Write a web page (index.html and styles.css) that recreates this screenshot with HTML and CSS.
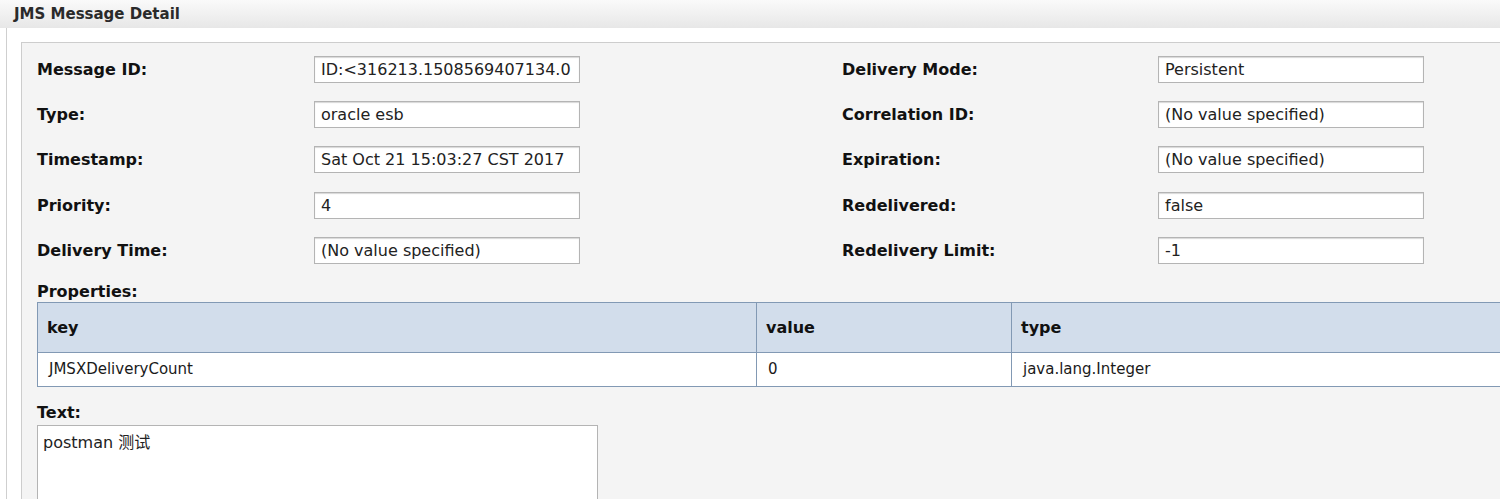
FILE: index.html
```
<!DOCTYPE html>
<html lang="en">
<head>
  <meta charset="UTF-8">
  <title>JMS Message Detail</title>
  <link rel="stylesheet" href="styles.css">
</head>
<body>
  <div class="titlebar">JMS Message Detail</div>
  <div class="page">
    <div class="panel">
      <div class="fields">
        <div class="label">Message ID:</div>
        <div class="field">ID:&lt;316213.1508569407134.0</div>
        <div></div>
        <div class="label">Delivery Mode:</div>
        <div class="field">Persistent</div>

        <div class="label">Type:</div>
        <div class="field">oracle esb</div>
        <div></div>
        <div class="label">Correlation ID:</div>
        <div class="field">(No value specified)</div>

        <div class="label">Timestamp:</div>
        <div class="field">Sat Oct 21 15:03:27 CST 2017</div>
        <div></div>
        <div class="label">Expiration:</div>
        <div class="field">(No value specified)</div>

        <div class="label">Priority:</div>
        <div class="field">4</div>
        <div></div>
        <div class="label">Redelivered:</div>
        <div class="field">false</div>

        <div class="label">Delivery Time:</div>
        <div class="field">(No value specified)</div>
        <div></div>
        <div class="label">Redelivery Limit:</div>
        <div class="field">-1</div>
      </div>

      <div class="label section">Properties:</div>
      <table class="props">
        <thead>
          <tr>
            <th class="col-key">key</th>
            <th class="col-value">value</th>
            <th>type</th>
          </tr>
        </thead>
        <tbody>
          <tr>
            <td>JMSXDeliveryCount</td>
            <td>0</td>
            <td>java.lang.Integer</td>
          </tr>
        </tbody>
      </table>

      <div class="label section text-label">Text:</div>
      <div class="textbox">postman 测试</div>
    </div>
  </div>
</body>
</html>
```

FILE: styles.css
```
html, body {
  overflow: hidden;
}
body {
  margin: 0;
  background: #fff;
  color: #111;
  font-family: "DejaVu Sans", "Noto Sans CJK SC", sans-serif;
}
.titlebar {
  height: 28px;
  line-height: 28px;
  padding-left: 14px;
  font-size: 15px;
  font-weight: bold;
  color: #2a2a2a;
  background: linear-gradient(#fafafa, #e7e7e7);
}
.page {
  margin-left: 6px;
  border-left: 1px solid #cfcfcf;
  padding: 14px 0 0 14px;
  height: 600px;
}
.panel {
  width: 1600px;
  height: 600px;
  background: #f4f4f4;
  border-top: 1px solid #cdcdcd;
  border-left: 1px solid #cdcdcd;
  padding: 13px 0 0 15px;
}
.fields {
  display: grid;
  grid-template-columns: 277px 266px 262px 316px 266px;
  row-gap: 18.2px;
  align-items: center;
}
.label {
  font-weight: bold;
  font-size: 16px;
  color: #111;
}
.field {
  height: 25px;
  line-height: 25px;
  border: 1px solid #b4b4b4;
  box-shadow: inset 0 1px 1px #d8d8d8;
  background: #fff;
  padding-left: 6px;
  font-size: 16px;
  color: #222;
  white-space: nowrap;
  overflow: hidden;
}
.section {
  margin-top: 18px;
  line-height: 20px;
}
.props {
  width: 1480px;
  border-collapse: collapse;
  font-size: 15px;
}
.props th, .props td {
  border: 1px solid #8299b4;
  text-align: left;
}
.props th {
  background: #d2ddeb;
  height: 49px;
  padding: 0 9px;
  font-size: 16px;
}
.props td {
  background: #fff;
  height: 33px;
  padding: 0 11px;
  color: #1a1a1a;
}
.col-key {
  width: 700px;
}
.col-value {
  width: 236px;
}
.text-label {
  margin-top: 16px;
}
.textbox {
  width: 554px;
  height: 120px;
  margin-top: 2px;
  border: 1px solid #b4b4b4;
  background: #fff;
  padding: 3px 0 0 5px;
  font-size: 16px;
  color: #222;
}
```
